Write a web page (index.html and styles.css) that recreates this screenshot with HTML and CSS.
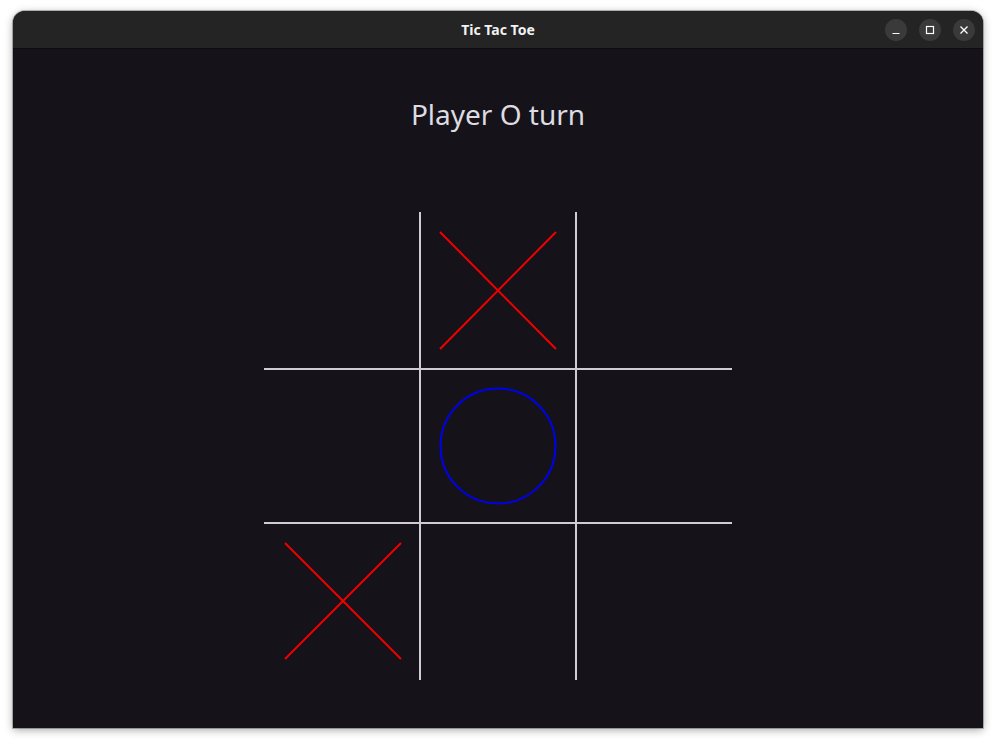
FILE: index.html
```html
<!DOCTYPE html>
<html>
<head>
<meta charset="utf-8">
<link rel="stylesheet" href="styles.css">
</head>
<body>
<div class="window">
  <div class="titlebar">
    <span class="title">Tic Tac Toe</span>
    <div class="controls">
      <span class="btn"><svg width="10" height="10" viewBox="0 0 10 10"><path d="M1.5 8.5h7" stroke="#fff" stroke-width="1.2"/></svg></span>
      <span class="btn"><svg width="10" height="10" viewBox="0 0 10 10"><rect x="1.5" y="1.5" width="7" height="7" fill="none" stroke="#fff" stroke-width="1.2"/></svg></span>
      <span class="btn"><svg width="10" height="10" viewBox="0 0 10 10"><path d="M1.5 1.5l7 7M8.5 1.5l-7 7" stroke="#fff" stroke-width="1.3"/></svg></span>
    </div>
  </div>
  <div class="content">
    <h1 class="status">Player O turn</h1>
    <svg class="board" width="470" height="470" viewBox="0 0 470 470">
      <g stroke="#cfcdd3" stroke-width="2">
        <line x1="157" y1="0" x2="157" y2="468"/>
        <line x1="313" y1="0" x2="313" y2="468"/>
        <line x1="1" y1="157" x2="469" y2="157"/>
        <line x1="1" y1="311" x2="469" y2="311"/>
      </g>
      <g stroke="#f00000" stroke-width="2">
        <line x1="177" y1="20" x2="293" y2="137"/>
        <line x1="293" y1="20" x2="177" y2="137"/>
        <line x1="22" y1="331" x2="138" y2="447"/>
        <line x1="138" y1="331" x2="22" y2="447"/>
      </g>
      <circle cx="235" cy="234" r="57.5" fill="none" stroke="#0000f0" stroke-width="2"/>
    </svg>
  </div>
</div>
</body>
</html>
```
FILE: styles.css
```css
html, body {
  margin: 0;
  padding: 0;
  background: #ffffff;
}
body {
  width: 996px;
  height: 744px;
  overflow: hidden;
}
.window {
  margin: 11px 0 0 13px;
  width: 970px;
  height: 717px;
  border-radius: 12px 12px 0 0;
  background: #151319;
  box-shadow: 0 2px 8px rgba(0,0,0,0.35), 0 0 0 1px rgba(0,0,0,0.25);
  display: flex;
  flex-direction: column;
  overflow: hidden;
}
.titlebar {
  height: 37px;
  flex: none;
  background: #242424;
  border-bottom: 1px solid #0c0c0c;
  display: flex;
  align-items: center;
  justify-content: center;
  position: relative;
  font-family: "Noto Sans", "Open Sans", sans-serif;
}
.title {
  color: #f2f2f2;
  font-weight: 700;
  font-size: 14px;
}
.controls {
  position: absolute;
  right: 8px;
  top: 8px;
  display: flex;
  gap: 12px;
}
.btn {
  width: 22px;
  height: 22px;
  border-radius: 50%;
  background: #3a3a3a;
  display: flex;
  align-items: center;
  justify-content: center;
}
.content {
  flex: 1;
  display: flex;
  flex-direction: column;
  align-items: center;
}
.status {
  margin: 47px 0 0;
  font-family: "Noto Sans", "Open Sans", sans-serif;
  font-weight: 400;
  font-size: 28px;
  line-height: 36px;
  color: #dedce2;
}
.board {
  display: block;
  margin-top: 80px;
}
```
